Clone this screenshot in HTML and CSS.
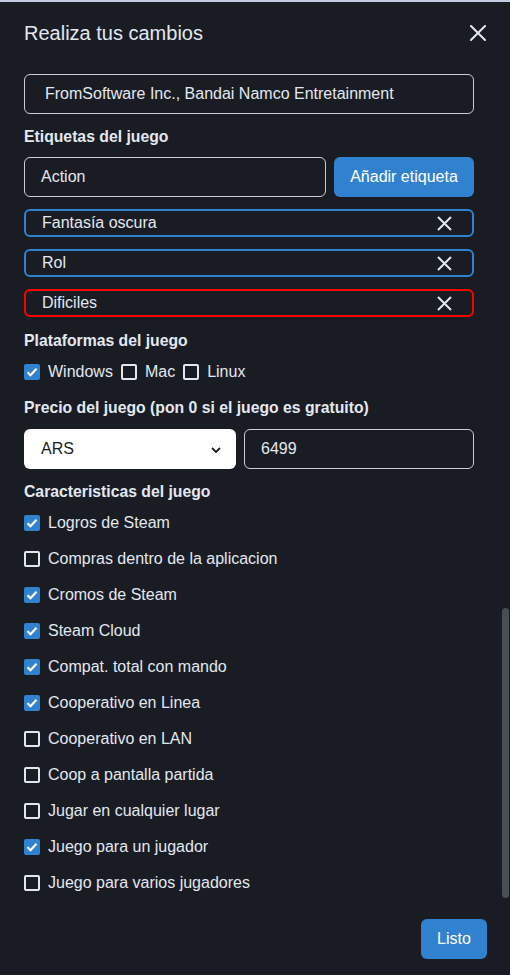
FILE: index.html
```html
<!DOCTYPE html>
<html lang="es">
<head>
<meta charset="utf-8">
<title>Realiza tus cambios</title>
<link rel="stylesheet" href="styles.css">
</head>
<body>
<div class="modal">
  <header class="modal-header">
    <h2 class="modal-title">Realiza tus cambios</h2>
    <button class="close-btn" aria-label="Cerrar">
      <svg width="16" height="16" viewBox="0 0 16 16"><path d="M1 1 L15 15 M15 1 L1 15" stroke="#e2e8f0" stroke-width="2" stroke-linecap="square" fill="none"/></svg>
    </button>
  </header>

  <div class="modal-body">
    <div class="field first-input">
      <div class="input wide-pad">FromSoftware Inc., Bandai Namco Entretainment</div>
    </div>

    <div class="label label-tags">Etiquetas del juego</div>
    <div class="row">
      <div class="input grow">Action</div>
      <button class="btn add-btn">Añadir etiqueta</button>
    </div>

    <div class="tags">
      <div class="tag"><span>Fantasía oscura</span><svg class="tag-x" width="15" height="15" viewBox="0 0 15 15"><path d="M1 1 L14 14 M14 1 L1 14" stroke="#e2e8f0" stroke-width="2" fill="none"/></svg></div>
      <div class="tag"><span>Rol</span><svg class="tag-x" width="15" height="15" viewBox="0 0 15 15"><path d="M1 1 L14 14 M14 1 L1 14" stroke="#e2e8f0" stroke-width="2" fill="none"/></svg></div>
      <div class="tag tag-red"><span>Dificiles</span><svg class="tag-x" width="15" height="15" viewBox="0 0 15 15"><path d="M1 1 L14 14 M14 1 L1 14" stroke="#e2e8f0" stroke-width="2" fill="none"/></svg></div>
    </div>

    <div class="label label-plat">Plataformas del juego</div>
    <div class="platforms">
      <label class="check"><span class="box on"><svg width="12" height="10" viewBox="0 0 12 10"><path d="M1.5 5.2 L4.5 8.2 L10.5 1.8" stroke="#fff" stroke-width="2.2" fill="none"/></svg></span>Windows</label>
      <label class="check"><span class="box"></span>Mac</label>
      <label class="check"><span class="box"></span>Linux</label>
    </div>

    <div class="label label-price">Precio del juego (pon 0 si el juego es gratuito)</div>
    <div class="row price-row">
      <div class="select">ARS<svg class="chev" width="10" height="6" viewBox="0 0 10 6"><path d="M1 1 L5 5 L9 1" stroke="#1a1c24" stroke-width="1.8" fill="none"/></svg></div>
      <div class="input price">6499</div>
    </div>

    <div class="label label-feat">Caracteristicas del juego</div>
    <div class="features">
      <label class="check feat"><span class="box on"><svg width="12" height="10" viewBox="0 0 12 10"><path d="M1.5 5.2 L4.5 8.2 L10.5 1.8" stroke="#fff" stroke-width="2.2" fill="none"/></svg></span>Logros de Steam</label>
      <label class="check feat"><span class="box"></span>Compras dentro de la aplicacion</label>
      <label class="check feat"><span class="box on"><svg width="12" height="10" viewBox="0 0 12 10"><path d="M1.5 5.2 L4.5 8.2 L10.5 1.8" stroke="#fff" stroke-width="2.2" fill="none"/></svg></span>Cromos de Steam</label>
      <label class="check feat"><span class="box on"><svg width="12" height="10" viewBox="0 0 12 10"><path d="M1.5 5.2 L4.5 8.2 L10.5 1.8" stroke="#fff" stroke-width="2.2" fill="none"/></svg></span>Steam Cloud</label>
      <label class="check feat"><span class="box on"><svg width="12" height="10" viewBox="0 0 12 10"><path d="M1.5 5.2 L4.5 8.2 L10.5 1.8" stroke="#fff" stroke-width="2.2" fill="none"/></svg></span>Compat. total con mando</label>
      <label class="check feat"><span class="box on"><svg width="12" height="10" viewBox="0 0 12 10"><path d="M1.5 5.2 L4.5 8.2 L10.5 1.8" stroke="#fff" stroke-width="2.2" fill="none"/></svg></span>Cooperativo en Linea</label>
      <label class="check feat"><span class="box"></span>Cooperativo en LAN</label>
      <label class="check feat"><span class="box"></span>Coop a pantalla partida</label>
      <label class="check feat"><span class="box"></span>Jugar en cualquier lugar</label>
      <label class="check feat"><span class="box on"><svg width="12" height="10" viewBox="0 0 12 10"><path d="M1.5 5.2 L4.5 8.2 L10.5 1.8" stroke="#fff" stroke-width="2.2" fill="none"/></svg></span>Juego para un jugador</label>
      <label class="check feat"><span class="box"></span>Juego para varios jugadores</label>
    </div>

    <div class="scroll-thumb"></div>
  </div>

  <footer class="modal-footer">
    <button class="btn done-btn">Listo</button>
  </footer>
</div>
</body>
</html>
```

FILE: styles.css
```css
* { box-sizing: border-box; }
html, body {
  margin: 0;
  padding: 0;
  background: #1a1c24;
}
body {
  font-family: "Liberation Sans", Arial, sans-serif;
  color: #e2e8f0;
  font-size: 16px;
}
.modal {
  border-top: 2px solid #c4cbe0;
  width: 510px;
  height: 975px;
  display: flex;
  flex-direction: column;
  position: relative;
}
.modal-header {
  height: 62px;
  display: flex;
  align-items: center;
  justify-content: space-between;
  padding: 0 24px;
}
.modal-title {
  margin: 0;
  font-size: 20px;
  font-weight: 400;
  color: #e2e8f0;
}
.close-btn {
  background: none;
  border: 0;
  padding: 0;
  width: 16px;
  height: 16px;
  display: flex;
  margin-top: -1px;
}
.modal-body {
  padding: 10px 36px 0 24px;
}
.input {
  height: 40px;
  border: 1px solid #c9ced6;
  border-radius: 6px;
  display: flex;
  align-items: center;
  padding: 0 16px;
  color: #e2e8f0;
}
.wide-pad { padding-left: 20px; }
.label {
  font-weight: 700;
  font-size: 15.75px;
  line-height: 20px;
  margin-top: 14px;
  color: #e2e8f0;
}
.label-tags { margin-top: 13px; }
.row {
  display: flex;
  gap: 8px;
  margin-top: 10px;
}
.grow { flex: 1; }
.btn {
  font-family: "Liberation Sans", Arial, sans-serif;
  font-size: 16px;
  color: #fff;
  background: #3182ce;
  border: 0;
  border-radius: 6px;
  height: 40px;
}
.add-btn { width: 140px; }
.tags {
  display: flex;
  flex-direction: column;
  gap: 12px;
  margin-top: 12px;
}
.tag {
  height: 28px;
  border: 2px solid #3182ce;
  border-radius: 6px;
  display: flex;
  align-items: center;
  justify-content: space-between;
  padding: 0 20px 0 16px;
}
.tag-red { border-color: #ff0000; }
.tag-x { display: block; }
.label-plat { margin-top: 14px; }
.platforms {
  display: flex;
  gap: 8px;
  margin-top: 11px;
  height: 20px;
  align-items: center;
}
.check {
  display: flex;
  align-items: center;
  gap: 8px;
}
.box {
  width: 16px;
  height: 16px;
  border: 2px solid #e2e8f0;
  border-radius: 2px;
  display: flex;
  align-items: center;
  justify-content: center;
}
.box.on {
  background: #3182ce;
  border-color: #3182ce;
}
.label-price { margin-top: 16px; }
.price-row { margin-top: 11px; }
.select {
  width: 212px;
  height: 40px;
  background: #fff;
  color: #1a1c24;
  border-radius: 6px;
  display: flex;
  align-items: center;
  justify-content: space-between;
  padding: 0 15px 0 17px;
}
.chev { display: block; margin-top: 1px; }
.price { flex: 1; }
.label-feat { margin-top: 13px; }
.features {
  margin-top: 3px;
  display: flex;
  flex-direction: column;
}
.feat { height: 36px; }
.scroll-thumb {
  position: absolute;
  left: 502px;
  top: 606px;
  width: 7px;
  height: 290px;
  border-radius: 4px;
  background: #494d56;
}
.modal-footer {
  display: flex;
  justify-content: flex-end;
  padding: 18px 23px 0 0;
}
.done-btn { width: 66px; }
```
